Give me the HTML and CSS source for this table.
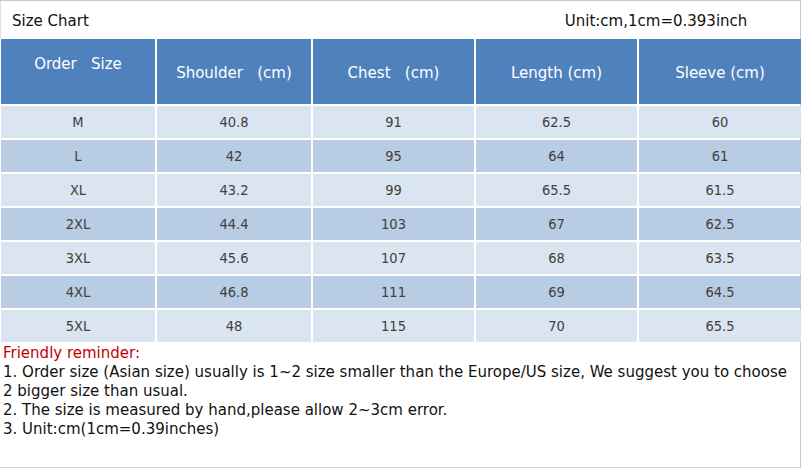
FILE: index.html
```html
<!DOCTYPE html>
<html>
<head>
<meta charset="utf-8">
<link rel="stylesheet" href="styles.css">
</head>
<body>
<div class="sheet">
  <div class="title-row">
    <span class="title">Size Chart</span>
    <span class="unit">Unit:cm,1cm=0.393inch</span>
  </div>
  <div class="grid">
    <div class="th th-order">Order&nbsp;&nbsp;&nbsp;Size</div>
    <div class="th">Shoulder&nbsp;&nbsp;&nbsp;(cm)</div>
    <div class="th">Chest&nbsp;&nbsp;&nbsp;(cm)</div>
    <div class="th">Length (cm)</div>
    <div class="th">Sleeve (cm)</div>

    <div class="td a">M</div><div class="td a">40.8</div><div class="td a">91</div><div class="td a">62.5</div><div class="td a">60</div>
    <div class="td b">L</div><div class="td b">42</div><div class="td b">95</div><div class="td b">64</div><div class="td b">61</div>
    <div class="td a">XL</div><div class="td a">43.2</div><div class="td a">99</div><div class="td a">65.5</div><div class="td a">61.5</div>
    <div class="td b">2XL</div><div class="td b">44.4</div><div class="td b">103</div><div class="td b">67</div><div class="td b">62.5</div>
    <div class="td a">3XL</div><div class="td a">45.6</div><div class="td a">107</div><div class="td a">68</div><div class="td a">63.5</div>
    <div class="td b">4XL</div><div class="td b">46.8</div><div class="td b">111</div><div class="td b">69</div><div class="td b">64.5</div>
    <div class="td a">5XL</div><div class="td a">48</div><div class="td a">115</div><div class="td a">70</div><div class="td a">65.5</div>
  </div>
  <div class="notes">
    <div class="reminder">Friendly reminder:</div>
    <div class="line">1. Order size (Asian size) usually is 1~2 size smaller than the Europe/US size, We suggest you to choose</div>
    <div class="line">2 bigger size than usual.</div>
    <div class="line">2. The size is measured by hand,please allow 2~3cm error.</div>
    <div class="line">3. Unit:cm(1cm=0.39inches)</div>
  </div>
</div>
</body>
</html>
```

FILE: styles.css
```css
html, body {
  margin: 0;
  padding: 0;
  background: #ffffff;
}
.sheet {
  width: 800px;
  height: 466px;
  border-top: 1px solid #c8c8c8;
  border-right: 1px solid #c8c8c8;
  border-bottom: 1px solid #d8d8d8;
  font-family: "DejaVu Sans", Verdana, sans-serif;
  display: flex;
  flex-direction: column;
}
.title-row {
  height: 38px;
  display: flex;
  align-items: center;
  font-size: 15px;
  color: #111;
  border-left: 1px solid #e0e0e0;
}
.title {
  padding-left: 11px;
  padding-top: 2px;
}
.unit {
  margin-left: 476px;
  padding-top: 2px;
}
.grid {
  display: grid;
  grid-template-columns: 154px 154px 161px 161px 162px;
  grid-template-rows: 65px repeat(7, 32px);
  column-gap: 2px;
  row-gap: 2px;
  background: #ffffff;
  padding-bottom: 2px;
  margin-left: 1px;
}
.th {
  background: #4f81bd;
  color: #ffffff;
  font-size: 15px;
  display: flex;
  align-items: center;
  justify-content: center;
  padding-top: 2px;
}
.th-order {
  align-items: flex-start;
  padding-top: 16px;
}
.td {
  font-family: "DejaVu Sans Condensed", "DejaVu Sans", sans-serif;
  font-size: 14.5px;
  color: #404040;
  display: flex;
  align-items: center;
  justify-content: center;
}
.td.a { background: #dbe5f1; }
.td.b { background: #b8cce4; }
.notes {
  padding-left: 3px;
  font-size: 15px;
  line-height: 19px;
  color: #111;
}
.reminder {
  color: #c00000;
}
```
